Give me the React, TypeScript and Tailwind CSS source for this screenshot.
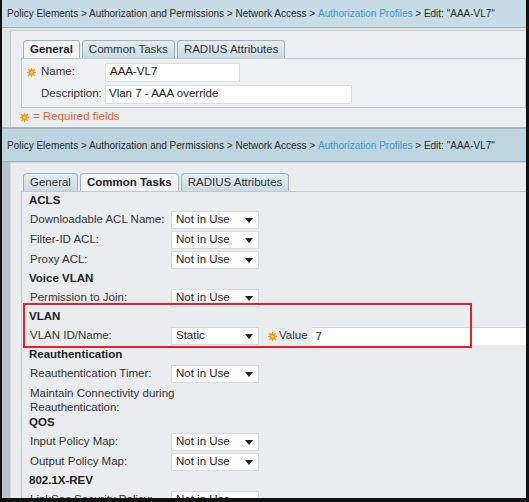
import React from "react"

const font = { fontFamily: '"Liberation Sans", Arial, sans-serif' }

function Star() {
  return (
    <svg width="9" height="9" viewBox="0 0 10 10" className="shrink-0">
      <g fill="#f39a1d">
        <circle cx="5" cy="5" r="3.2" />
        <rect x="4.2" y="0" width="1.6" height="10" />
        <rect x="0" y="4.2" width="10" height="1.6" />
        <rect x="4.2" y="0" width="1.6" height="10" transform="rotate(45 5 5)" />
        <rect x="4.2" y="0" width="1.6" height="10" transform="rotate(-45 5 5)" />
      </g>
      <circle cx="5" cy="5" r="1.4" fill="#ffd36a" />
    </svg>
  )
}

function Breadcrumb({ tall }: { tall?: boolean }) {
  return (
    <div
      className={`${tall ? "h-[33px] bg-[#bdd5df]" : "h-[28px] bg-[#c7dce5]"} flex items-center px-[5px] text-[10px] text-[#2b2b2b] border-b border-[#9fb4bf] whitespace-nowrap`}
    >
      <span>Policy Elements &gt; Authorization and Permissions &gt; Network Access &gt;&nbsp;</span>
      <span className="text-[#3c9ad6]">Authorization Profiles</span>
      <span>&nbsp;&gt; Edit: "AAA-VL7"</span>
    </div>
  )
}

function Tabs({ active }: { active: number }) {
  const tabs = ["General", "Common Tasks", "RADIUS Attributes"]
  return (
    <div className="flex items-end gap-[2px] ml-[2px] h-[18px]">
      {tabs.map((t, i) => (
        <div
          key={t}
          className={`h-full flex items-center px-[6px] rounded-t-[4px] border border-b-0 border-[#9fb1bc] text-[11.5px] ${
            i === active
              ? "bg-[#f2f4f6] font-bold text-[#222] h-[19px]"
              : "bg-gradient-to-b from-[#e4edf2] to-[#c9dbe4] text-[#333]"
          }`}
        >
          {t}
        </div>
      ))}
    </div>
  )
}

function Select({ value }: { value: string }) {
  return (
    <div className="w-[88px] h-[18px] bg-white border border-[#d5dadd] flex items-center justify-between pl-[4px] pr-[5px] text-[11.5px] text-[#222]">
      <span>{value}</span>
      <svg width="8" height="5" viewBox="0 0 8 5">
        <path d="M0 0h8L4 5z" fill="#222" />
      </svg>
    </div>
  )
}

function Heading({ children }: { children: React.ReactNode }) {
  return (
    <div className="h-[18px] flex items-center pl-[7px] text-[11.5px] font-bold text-[#222]">{children}</div>
  )
}

function Row({ label, value = "Not in Use", children }: { label: string; value?: string; children?: React.ReactNode }) {
  return (
    <div className="h-[20px] flex items-center pl-[8px] text-[11.5px] text-[#333]">
      <span className="w-[141px] shrink-0">{label}</span>
      <Select value={value} />
      {children}
    </div>
  )
}

export default function App() {
  return (
    <div
      className="w-[529px] h-[502px] overflow-hidden bg-[#e6eaed] border-l-2 border-r-[3px] border-b-[4px] border-[#111] flex flex-col"
      style={font}
    >
      {/* first screenshot */}
      <div className="h-[129px] shrink-0 flex flex-col border-b-2 border-[#aab6bd]">
        <Breadcrumb />
        <div className="flex-1 flex bg-[#dfe4e7] pt-[2px] pl-[8px]">
          <div className="flex-1 bg-[#eaeef0] border-t border-l border-[#c2cbd0] pt-[9px] pl-[10px]">
            <Tabs active={0} />
            <div className="h-[50px] bg-[#eef1f3] border border-[#bfc9cf] flex flex-col justify-center gap-[3px] text-[11.5px] text-[#333]">
              <div className="flex items-center h-[19px] pl-[5px]">
                <Star />
                <span className="ml-[5px] w-[64px]">Name:</span>
                <div className="w-[135px] h-[19px] bg-white border border-[#d8dde0] flex items-center px-[4px] text-[#222]">
                  AAA-VL7
                </div>
              </div>
              <div className="flex items-center h-[19px] pl-[19px]">
                <span className="w-[64px]">Description:</span>
                <div className="w-[247px] h-[19px] bg-white border border-[#d8dde0] flex items-center px-[3px] text-[#222]">
                  Vlan 7 - AAA override
                </div>
              </div>
            </div>
            <div className="flex items-center h-[16px] -ml-[1px] mt-[1px] text-[11.5px] text-[#e8622a]">
              <Star />
              <span className="ml-[4px]">= Required fields</span>
            </div>
          </div>
        </div>
      </div>

      {/* second screenshot */}
      <div className="flex-1 flex flex-col">
        <Breadcrumb tall />
        <div className="flex-1 flex bg-[#b9c4ca] pl-[8px]">
          <div className="flex-1 bg-[#e9edf0] border-t border-l border-[#d3dadf] pt-[10px] pl-[10px]">
            <Tabs active={1} />
            <div className="bg-[#e9edf0] border-t border-l border-[#bfc9cf]">
              <Heading>ACLS</Heading>
              <Row label="Downloadable ACL Name:" />
              <Row label="Filter-ID ACL:" />
              <Row label="Proxy ACL:" />
              <Heading>Voice VLAN</Heading>
              <Row label="Permission to Join:" />
              <div className="relative">
                <Heading>VLAN</Heading>
                <Row label="VLAN ID/Name:" value="Static">
                  <div className="flex items-center ml-[9px]">
                    <Star />
                    <span className="ml-[2px] mr-[4px]">Value</span>
                    <div className="w-[230px] h-[18px] bg-white border-t border-[#cfd4d8] flex items-center px-[4px] text-[#222]">
                      7
                    </div>
                  </div>
                </Row>
                <div className="absolute left-[1px] top-[-5px] bottom-[-2px] w-[449px] border-2 border-[#e5202b] pointer-events-none" />
              </div>
              <Heading>Reauthentication</Heading>
              <Row label="Reauthentication Timer:" />
              <div className="h-[30px] pl-[8px] pt-[2px] text-[11.5px] leading-[14px] text-[#333]">
                Maintain Connectivity during
                <br />
                Reauthentication:
              </div>
              <Heading>QOS</Heading>
              <Row label="Input Policy Map:" />
              <Row label="Output Policy Map:" />
              <Heading>802.1X-REV</Heading>
              <Row label="LinkSec Security Policy:" />
            </div>
          </div>
        </div>
      </div>
    </div>
  )
}
